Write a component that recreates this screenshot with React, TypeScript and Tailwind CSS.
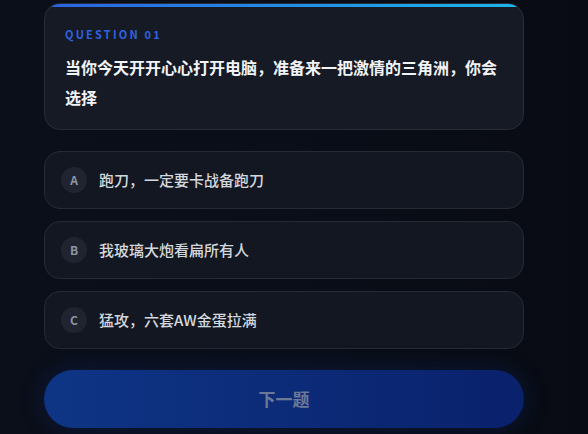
import React from "react";

const options = [
  { k: "A", t: "跑刀，一定要卡战备跑刀" },
  { k: "B", t: "我玻璃大炮看扁所有人" },
  { k: "C", t: "猛攻，六套AW金蛋拉满" },
];

export default function App() {
  return (
    <div
      className="w-[588px] h-[434px] overflow-hidden bg-gradient-to-r from-[#0b0f1a] via-[#0a0e18] to-[#080b13]"
      style={{ fontFamily: '"Noto Sans CJK SC", "Noto Sans", sans-serif' }}
    >
      <div className="w-[480px] ml-[44px] pt-[3px] flex flex-col">
        <div className="relative overflow-hidden rounded-2xl border border-[#272c37] bg-[#151a24] px-5 pt-[22px] pb-[17px]">
          <div className="absolute left-0 right-0 top-0 h-[3px] bg-gradient-to-r from-[#2b62e3] to-[#1cb6ea]" />
          <div className="text-[11px] leading-[16px] font-bold tracking-[0.2em] text-[#2f62e0]">
            QUESTION 01
          </div>
          <div className="mt-[10px] text-[16px] leading-[30px] font-bold text-[#f1f3f7]">
            当你今天开开心心打开电脑，准备来一把激情的三角洲，你会选择
          </div>
        </div>

        <div className="mt-[21px] flex flex-col gap-3">
          {options.map((o) => (
            <div
              key={o.k}
              className="flex items-center gap-[12px] h-[58px] rounded-2xl border border-[#252a35] bg-[#131721] pl-4 pr-4"
            >
              <div className="w-[26px] h-[26px] rounded-full bg-[#1f2430] flex items-center justify-center text-[12px] font-bold text-[#8d95a5]">
                {o.k}
              </div>
              <div className="text-[15px] font-medium text-[#d3d7de]">{o.t}</div>
            </div>
          ))}
        </div>

        <button className="mt-[21px] h-[58px] rounded-full bg-gradient-to-r from-[#0e3585] to-[#0a216c] text-[17px] font-bold text-[#6c7a98] shadow-[0_0_24px_rgba(20,60,170,0.25)]">
          下一题
        </button>
      </div>
    </div>
  );
}
